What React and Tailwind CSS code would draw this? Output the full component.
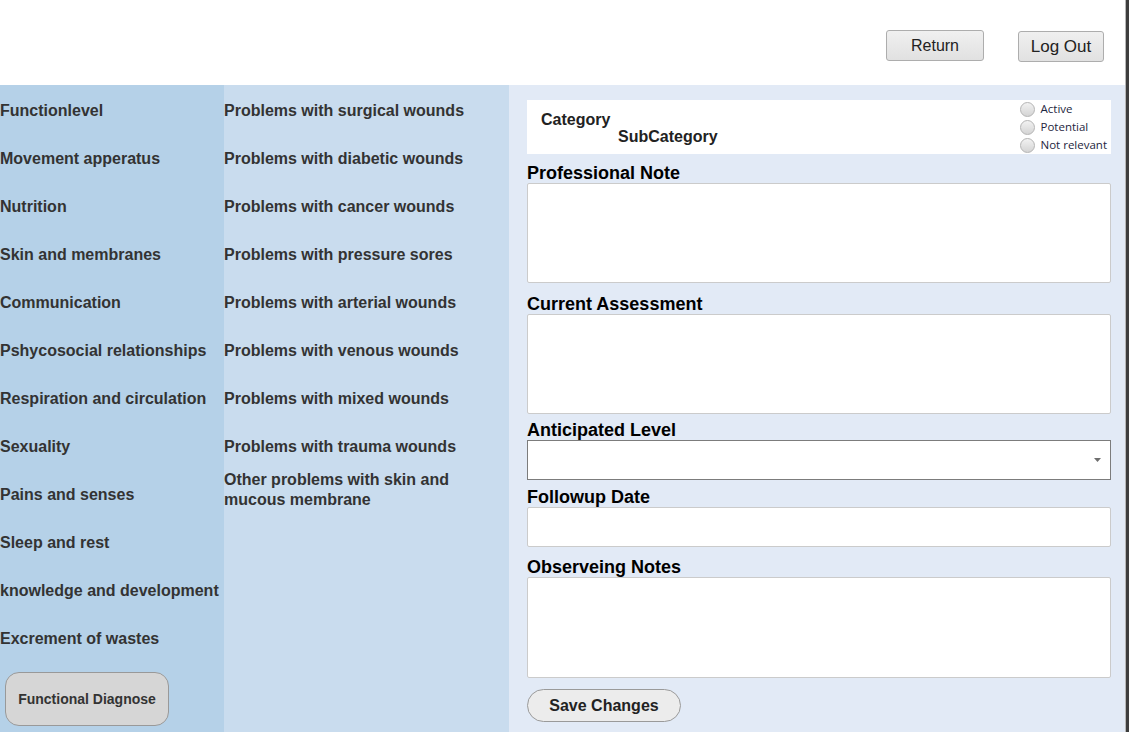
import React from 'react';

const categories = [
  'Functionlevel',
  'Movement apperatus',
  'Nutrition',
  'Skin and membranes',
  'Communication',
  'Pshycosocial relationships',
  'Respiration and circulation',
  'Sexuality',
  'Pains and senses',
  'Sleep and rest',
  'knowledge and development',
  'Excrement of wastes',
];

const subCategories = [
  'Problems with surgical wounds',
  'Problems with diabetic wounds',
  'Problems with cancer wounds',
  'Problems with pressure sores',
  'Problems with arterial wounds',
  'Problems with venous wounds',
  'Problems with mixed wounds',
  'Problems with trauma wounds',
];

const Radio = ({ label }) => (
  <label className="flex items-center gap-[6px] h-[19px]">
    <span className="w-[15px] h-[15px] rounded-full border border-[#b4b4b4] bg-gradient-to-b from-[#f2f2f2] to-[#d4d4d4]" />
    <span className="text-[11.5px] text-[#1e2640] font-['Open_Sans',sans-serif]">{label}</span>
  </label>
);

const Label = ({ children, className = '' }) => (
  <div className={`text-[18px] leading-5 font-bold text-black ${className}`}>{children}</div>
);

const App = () => {
  return (
    <div className="flex w-[1129px] h-[732px] overflow-hidden font-['Liberation_Sans',Arial,sans-serif] bg-white">
      <div className="flex flex-col w-[1126px] border-r border-[#b8b8b8]">
        {/* Header */}
        <div className="h-[85px] flex justify-end items-start pr-[21px] gap-[34px]">
          <button className="mt-[30px] w-[98px] h-[31px] rounded-[3px] border border-[#adadad] bg-gradient-to-b from-[#f0f0f0] to-[#e1e1e1] text-[16px] text-[#222]">
            Return
          </button>
          <button className="mt-[31px] w-[86px] h-[31px] rounded-[3px] border border-[#adadad] bg-gradient-to-b from-[#f0f0f0] to-[#e1e1e1] text-[17px] text-[#222]">
            Log Out
          </button>
        </div>

        <div className="flex flex-1">
          {/* Categories */}
          <div className="w-[224px] bg-[#b5d1e8] flex flex-col pt-[2px]">
            {categories.map((c) => (
              <div key={c} className="h-12 flex items-center text-[16px] font-bold text-[#333] whitespace-nowrap">
                {c}
              </div>
            ))}
            <button className="mt-[9px] ml-[5px] w-[164px] h-[54px] rounded-[14px] border border-[#999] bg-[#d6d6d6] text-[14px] font-bold text-[#333]">
              Functional Diagnose
            </button>
          </div>

          {/* Sub categories */}
          <div className="w-[285px] bg-[#c9dcee] flex flex-col pt-[2px]">
            {subCategories.map((c) => (
              <div key={c} className="h-12 flex items-center text-[16px] font-bold text-[#333]">
                {c}
              </div>
            ))}
            <div className="-mt-[1px] pr-[30px] text-[16px] leading-5 font-bold text-[#333]">
              Other problems with skin and mucous membrane
            </div>
          </div>

          {/* Detail form */}
          <div className="flex-1 bg-[#e2eaf6] pt-[15px] pl-[18px] pr-[14px] flex flex-col">
            <div className="h-[54px] bg-white flex justify-between">
              <div className="pl-[14px] pt-[11px] text-[16px] font-bold text-[#222] leading-[18px]">
                <div>Category</div>
                <div className="ml-[77px] -mt-px">SubCategory</div>
              </div>
              <div className="flex flex-col pr-[4px]">
                <Radio label="Active" />
                <Radio label="Potential" />
                <Radio label="Not relevant" />
              </div>
            </div>

            <Label className="mt-[9px]">Professional Note</Label>
            <textarea className="h-[100px] bg-white border border-[#cbcbcb] rounded-[2px] resize-none" />

            <Label className="mt-[11px]">Current Assessment</Label>
            <textarea className="h-[100px] bg-white border border-[#cbcbcb] rounded-[2px] resize-none" />

            <Label className="mt-[6px]">Anticipated Level</Label>
            <div className="h-[40px] bg-white border border-[#7c7c7c] flex items-center justify-end pr-[9px]">
              <svg width="7" height="4" viewBox="0 0 7 4">
                <path d="M0 0 L7 0 L3.5 4 Z" fill="#6e6e6e" />
              </svg>
            </div>

            <Label className="mt-[7px]">Followup Date</Label>
            <div className="h-[40px] bg-white border border-[#cbcbcb] rounded-[2px]" />

            <Label className="mt-[10px]">Observeing Notes</Label>
            <textarea className="h-[101px] bg-white border border-[#cbcbcb] rounded-[2px] resize-none" />

            <button className="mt-[11px] w-[154px] h-[33px] rounded-full border border-[#9a9a9a] bg-[#ececec] text-[16px] font-bold text-[#222]">
              Save Changes
            </button>
          </div>
        </div>
      </div>
      <div className="w-[3px] bg-[#3d3d3d]" />
    </div>
  );
};

export default App;
